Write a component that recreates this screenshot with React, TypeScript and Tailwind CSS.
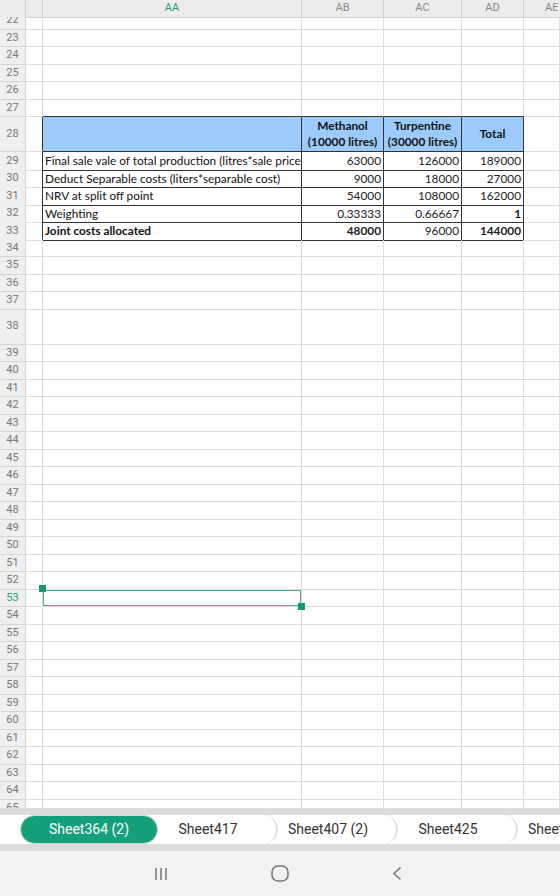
import React from 'react';

const gridCols = 'grid grid-cols-[26px_17px_259px_82px_78px_62px_1fr]';
const cellFont = { fontFamily: 'Lato, "Open Sans", sans-serif' };
const uiFont = { fontFamily: 'Roboto, "Open Sans", sans-serif' };

type Row = { n: number; h: string };

const rows: Row[] = Array.from({ length: 44 }, (_, i) => {
    const n = 22 + i;
    return { n, h: n === 28 || n === 38 ? 'h-[35px]' : 'h-[17.5px]' };
});

const data: Record<number, { label: string; bold?: boolean; vals: { v: string; b?: boolean }[] }> = {
    29: { label: 'Final sale vale of total production (litres*sale price', vals: [{ v: '63000' }, { v: '126000' }, { v: '189000' }] },
    30: { label: 'Deduct Separable costs (liters*separable cost)', vals: [{ v: '9000' }, { v: '18000' }, { v: '27000' }] },
    31: { label: 'NRV at split off point', vals: [{ v: '54000' }, { v: '108000' }, { v: '162000' }] },
    32: { label: 'Weighting', vals: [{ v: '0.33333' }, { v: '0.66667' }, { v: '1', b: true }] },
    33: { label: 'Joint costs allocated', bold: true, vals: [{ v: '48000', b: true }, { v: '96000' }, { v: '144000', b: true }] },
};

const plain = 'border-r border-b border-[#dedede]';
const dark = 'border-r border-b border-[#333]';

function SheetRow({ n, h }: Row) {
    const inTable = n >= 28 && n <= 33;
    const aboveTable = n === 27;
    const selected = n === 53;
    const d = data[n];
    const cellBorder = inTable ? dark : aboveTable ? 'border-r border-[#dedede] border-b border-b-[#333]' : plain;

    return (
        <div className={`${gridCols} ${h}`}>
            <div
                className={`flex items-center justify-center border-r border-b border-[#d4d4d4] bg-[#efefef] text-[11px] ${selected ? 'text-[#1f9b76]' : 'text-[#777]'}`}
                style={uiFont}
            >
                {n}
            </div>
            <div className={inTable ? 'border-r border-b border-r-[#333] border-b-[#dedede]' : plain} />
            {/* AA */}
            <div className={`relative overflow-hidden ${cellBorder} ${n === 28 ? 'bg-[#9ccbfb]' : ''}`}>
                {d && (
                    <div
                        className={`whitespace-nowrap pl-[2px] text-[11.8px] leading-[17px] text-[#111] ${d.bold ? 'font-bold' : ''}`}
                        style={cellFont}
                    >
                        {d.label}
                    </div>
                )}
                {selected && <div className="absolute inset-0 border border-[#4aa898]" />}
            </div>
            {/* AB AC AD */}
            {n === 28 ? (
                <>
                    <HeaderCell top="Methanol" bottom="(10000 litres)" />
                    <HeaderCell top="Turpentine" bottom="(30000 litres)" />
                    <div className={`${dark} flex items-center justify-center bg-[#9ccbfb] text-[11.8px] font-bold text-[#111]`} style={cellFont}>
                        Total
                    </div>
                </>
            ) : (
                [0, 1, 2].map((i) => (
                    <div
                        key={i}
                        className={`${cellBorder} flex items-center justify-end pr-[2px] text-[11.8px] text-[#222] ${d?.vals[i].b ? 'font-bold' : ''}`}
                        style={cellFont}
                    >
                        {d?.vals[i].v}
                    </div>
                ))
            )}
            <div className={plain} />
        </div>
    );
}

function HeaderCell({ top, bottom }: { top: string; bottom: string }) {
    return (
        <div
            className={`${dark} flex flex-col items-center justify-center bg-[#9ccbfb] text-[11.8px] font-bold leading-[16px] text-[#111]`}
            style={cellFont}
        >
            <span>{top}</span>
            <span>{bottom}</span>
        </div>
    );
}

const tabs = ['Sheet417', 'Sheet407 (2)', 'Sheet425', 'Sheet426 (2)'];

export default function App() {
    return (
        <div className="flex h-[896px] w-[560px] flex-col overflow-hidden bg-white">
            {/* Column headers */}
            <div className={`${gridCols} h-[17px] shrink-0 text-[11px] text-[#888]`} style={uiFont}>
                <div className="border-r border-b border-[#d0d0d0] bg-[#ececec]" />
                <div className="border-r border-b border-[#d0d0d0] bg-[#ececec]" />
                <div className="flex items-center justify-center border-r border-b border-[#d0d0d0] bg-[#ececec] text-[#1f9b76]">AA</div>
                <div className="flex items-center justify-center border-r border-b border-[#d0d0d0] bg-[#ececec]">AB</div>
                <div className="flex items-center justify-center border-r border-b border-[#d0d0d0] bg-[#ececec]">AC</div>
                <div className="flex items-center justify-center border-r border-b border-[#d0d0d0] bg-[#ececec]">AD</div>
                <div className="flex items-center overflow-hidden whitespace-nowrap border-b border-[#d0d0d0] bg-[#ececec] pl-[21px]">AE</div>
            </div>

            {/* Sheet body */}
            <div className="relative min-h-0 flex-1 overflow-hidden">
                <div className="-mt-[5px]">
                    {rows.map((r) => (
                        <SheetRow key={r.n} {...r} />
                    ))}
                </div>
                {/* selection handles */}
                <div className="absolute left-[39px] top-[568px] h-[7px] w-[7px] bg-[#139a72]" />
                <div className="absolute left-[298px] top-[586px] h-[7px] w-[7px] bg-[#139a72]" />
            </div>

            {/* Sheet tabs */}
            <div className="shrink-0 border-y-[7px] border-[#dcdcdc] bg-white">
                <div className="flex h-[29px] items-stretch pl-[20px] text-[14px] text-[#333]" style={uiFont}>
                    <div className="z-10 flex w-[138px] shrink-0 items-center justify-center rounded-full border border-[#d8d8d8] bg-[#14a07a] text-white">
                        Sheet364 (2)
                    </div>
                    {tabs.map((t, i) => (
                        <div
                            key={t}
                            className={`flex shrink-0 items-center justify-center whitespace-nowrap rounded-r-[16px] border-r-2 border-[#dedede] pr-[18px] ${
                                i === 0 ? '-ml-[8px] w-[128px] pl-[8px]' : 'w-[120px]'
                            }`}
                        >
                            {t}
                        </div>
                    ))}
                </div>
            </div>

            {/* Navigation bar */}
            <div className="flex h-[45px] shrink-0 items-center justify-center gap-[103px] bg-[#f2f2f2] pr-[4px]">
                <svg width="14" height="14" viewBox="0 0 14 14" className="text-[#777]">
                    <path d="M2 1v12M7 1v12M12 1v12" stroke="currentColor" strokeWidth="1.5" />
                </svg>
                <svg width="18" height="17" viewBox="0 0 18 17" className="text-[#777]">
                    <rect x="1" y="1" width="16" height="15" rx="6" fill="none" stroke="currentColor" strokeWidth="1.6" />
                </svg>
                <svg width="10" height="15" viewBox="0 0 10 15" className="text-[#777]">
                    <path d="M8.5 1.5 2 7.5l6.5 6" fill="none" stroke="currentColor" strokeWidth="1.5" />
                </svg>
            </div>
        </div>
    );
}
